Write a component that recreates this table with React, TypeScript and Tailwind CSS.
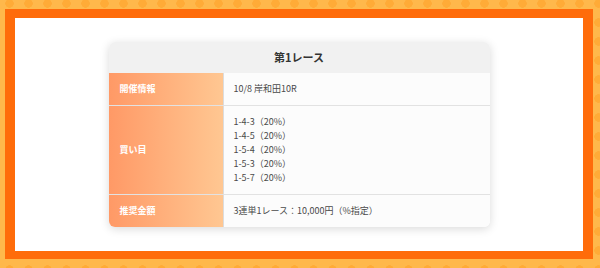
const rows = [
  { label: '開催情報', values: ['10/8 岸和田10R'] },
  {
    label: '買い目',
    values: ['1-4-3（20%）', '1-4-5（20%）', '1-5-4（20%）', '1-5-3（20%）', '1-5-7（20%）'],
  },
  { label: '推奨金額', values: ['3連単1レース：10,000円（%指定）'] },
];

function RaceRow({ label, values, last }: { label: string; values: string[]; last: boolean }) {
  return (
    <div className={`flex ${last ? '' : 'border-b border-[#e2e2e2]'}`}>
      <div className="flex w-[114px] shrink-0 items-center bg-gradient-to-r from-[#ff9966] to-[#ffc792] pl-[11px] text-[9px] font-bold text-white">
        {label}
      </div>
      <div className="flex-1 border-l border-[#dcdcdc] bg-[#fcfcfc] py-[9px] pl-[10px] text-[9px] leading-[14px] text-[#4a4a4a]">
        {values.map((v) => (
          <div key={v}>{v}</div>
        ))}
      </div>
    </div>
  );
}

export default function App() {
  return (
    <div
      className="h-[268px] w-[600px] bg-[#ffb84b] bg-[radial-gradient(circle,#ffab37_4px,transparent_4.5px)] bg-[length:19px_19px] bg-[position:0px_-6px] pb-[9px] pl-[5px] pr-[7px] pt-[9px]"
      style={{ fontFamily: '"Noto Sans CJK JP", "Noto Sans", sans-serif' }}
    >
      <div className="flex h-full items-start justify-center border-x-[10px] border-b-[8px] border-t-[9px] border-[#ff6c0a] bg-white pt-[24px]">
        <div className="w-[381px] overflow-hidden rounded-[6px] shadow-[0_2px_10px_rgba(0,0,0,0.15)]">
          <div className="flex h-[31px] items-center justify-center bg-[#f1f1f1] text-[11px] font-bold text-[#333]">
            第1レース
          </div>
          {rows.map((r, i) => (
            <RaceRow key={r.label} label={r.label} values={r.values} last={i === rows.length - 1} />
          ))}
        </div>
      </div>
    </div>
  );
}
